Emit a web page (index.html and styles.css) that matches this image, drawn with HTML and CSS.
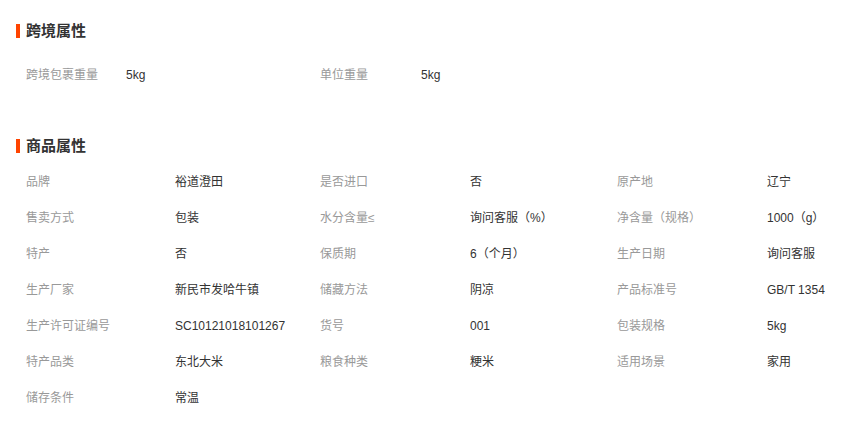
FILE: index.html
```html
<!DOCTYPE html>
<html lang="zh-CN">
<head>
<meta charset="utf-8">
<title>属性</title>
<link rel="stylesheet" href="styles.css">
</head>
<body>
<div class="page">
  <section class="sec sec-cross">
    <h2 class="title">跨境属性</h2>
    <ul class="attrs attrs-cross">
      <li><span class="k">跨境包裹重量</span><span class="v">5kg</span></li>
      <li><span class="k">单位重量</span><span class="v">5kg</span></li>
    </ul>
  </section>
  <section class="sec sec-goods">
    <h2 class="title">商品属性</h2>
    <ul class="attrs attrs-goods">
      <li><span class="k">品牌</span><span class="v">裕道澄田</span></li>
      <li><span class="k">是否进口</span><span class="v">否</span></li>
      <li><span class="k">原产地</span><span class="v">辽宁</span></li>
      <li><span class="k">售卖方式</span><span class="v">包装</span></li>
      <li><span class="k">水分含量≤</span><span class="v">询问客服（%）</span></li>
      <li><span class="k">净含量（规格）</span><span class="v">1000（g）</span></li>
      <li><span class="k">特产</span><span class="v">否</span></li>
      <li><span class="k">保质期</span><span class="v">6（个月）</span></li>
      <li><span class="k">生产日期</span><span class="v">询问客服</span></li>
      <li><span class="k">生产厂家</span><span class="v">新民市发哈牛镇</span></li>
      <li><span class="k">储藏方法</span><span class="v">阴凉</span></li>
      <li><span class="k">产品标准号</span><span class="v">GB/T 1354</span></li>
      <li><span class="k">生产许可证编号</span><span class="v">SC10121018101267</span></li>
      <li><span class="k">货号</span><span class="v">001</span></li>
      <li><span class="k">包装规格</span><span class="v">5kg</span></li>
      <li><span class="k">特产品类</span><span class="v">东北大米</span></li>
      <li><span class="k">粮食种类</span><span class="v">粳米</span></li>
      <li><span class="k">适用场景</span><span class="v">家用</span></li>
      <li><span class="k">储存条件</span><span class="v">常温</span></li>
    </ul>
  </section>
</div>
</body>
</html>
```
FILE: styles.css
```css
* { box-sizing: border-box; }
html, body { margin: 0; padding: 0; background: #fff; }
body {
  font-family: "Liberation Sans", "Noto Sans CJK SC", sans-serif;
  font-size: 12px;
  color: #333;
}
.page { padding: 21px 0 0 16px; width: 863px; }
.title {
  margin: 0;
  display: flex;
  align-items: center;
  gap: 6px;
  height: 20px;
  line-height: 20px;
  font-size: 15px;
  font-weight: bold;
  color: #333;
}
.title::before {
  content: "";
  width: 4px;
  height: 14px;
  background: #ff4400;
}
.attrs {
  list-style: none;
  margin: 0;
  padding: 0 0 0 10px;
  display: grid;
  grid-template-columns: 294px 297px 1fr;
}
.attrs li { display: flex; height: 36px; line-height: 36px; white-space: nowrap; }
.k { color: #999; flex: none; }
.v { color: #333; }
.attrs-cross { margin-top: 16px; }
.attrs-cross .k { width: 100px; }
.attrs-cross li:nth-child(2) .k { width: 101px; }
.sec-goods { margin-top: 43px; }
.attrs-goods { margin-top: 8px; }
.attrs-goods .k { width: 150px; }
.attrs-goods li:nth-child(3n+1) .k { width: 149px; }
```
